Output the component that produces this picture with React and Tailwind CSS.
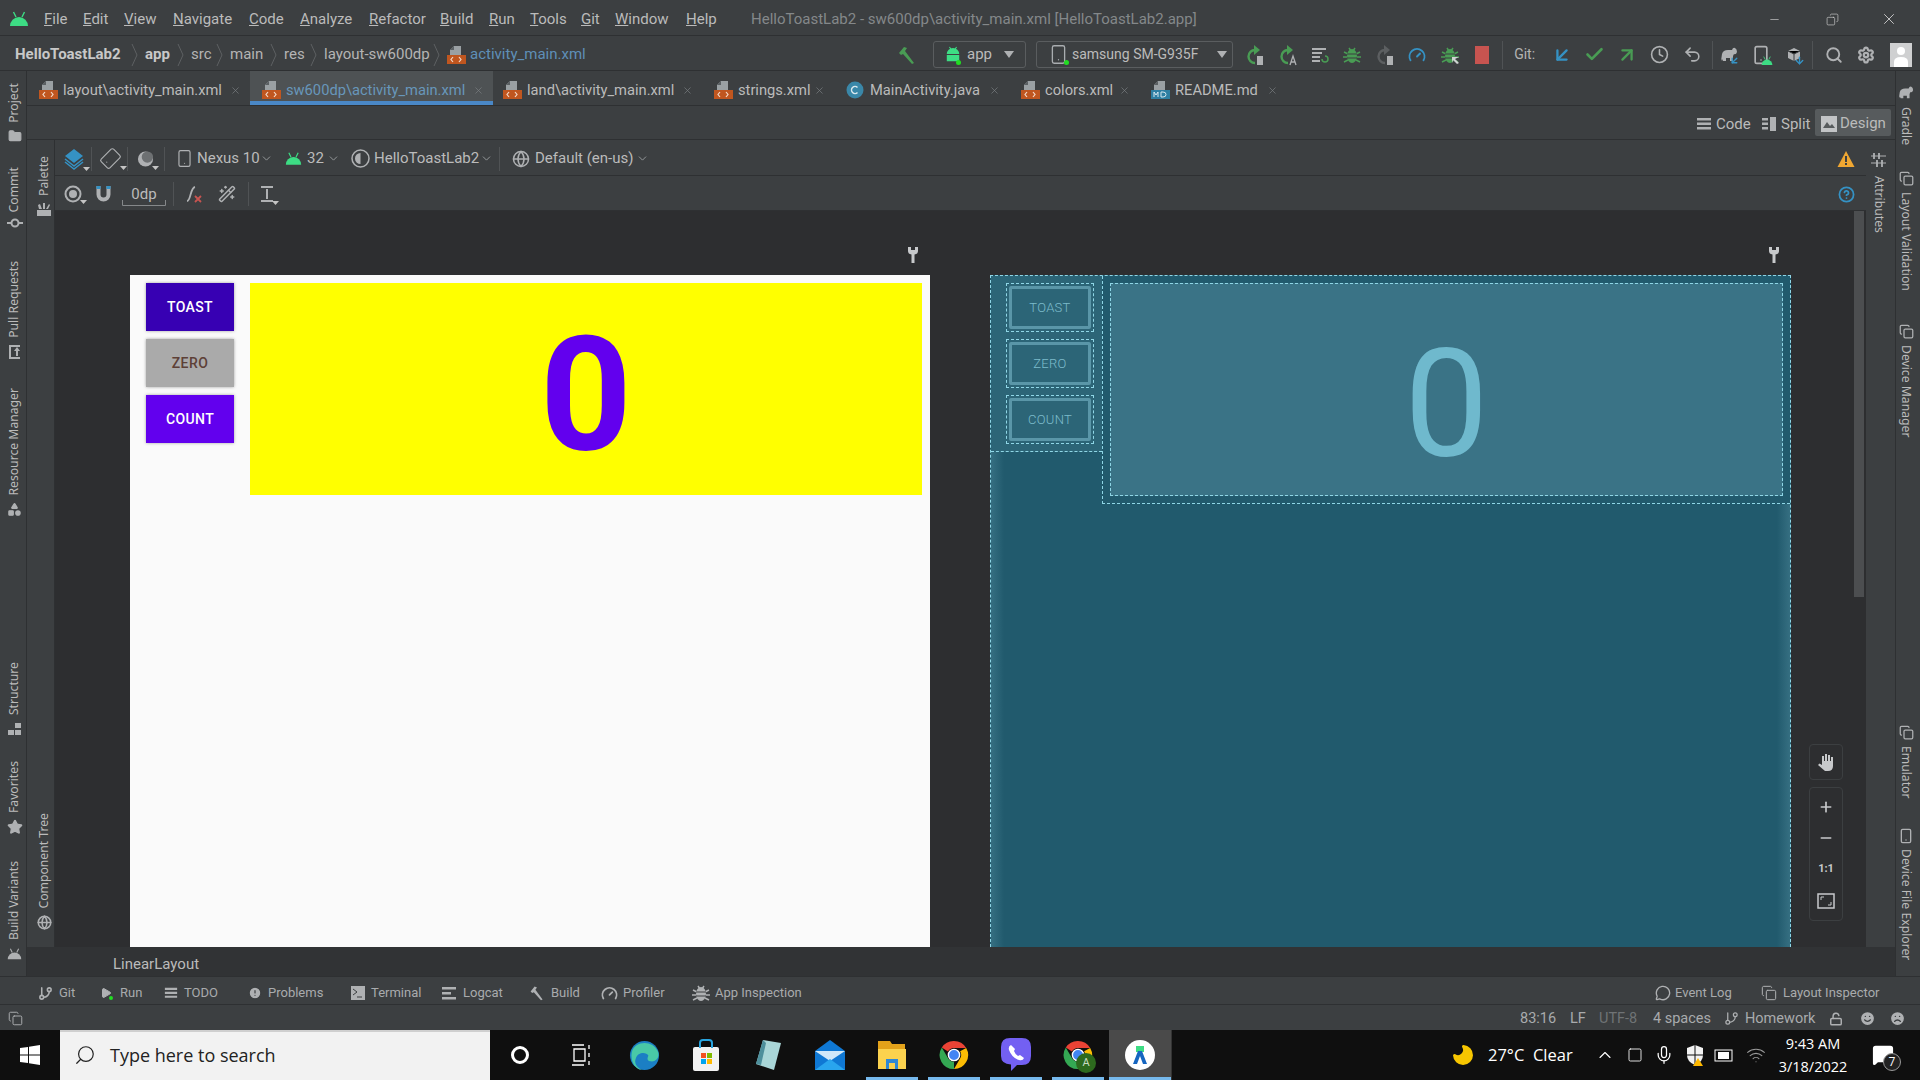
import React from 'react'
import {
  Search, Settings, Clock, Undo2, Check, ArrowUpRight, ArrowDownLeft, Wand2,
  Smartphone, Globe, ChevronDown, X, Minus, Plus, Star, Folder, Play, AlertCircle,
  ChevronUp, Smile, Frown, LockOpen, Mic, Wifi, Square, Shapes, Gauge, Copy, MessageSquare, MessageCircle, CircleHelp, Moon, GitBranch
} from 'lucide-react'

const XmlIcon = () => (
  <svg width="20" height="20" viewBox="0 0 20 20" className="shrink-0">
    <path d="M7 1h7v9H3V5z" fill="#9aa0a3" />
    <path d="M7 1v4H3z" fill="#5b6063" />
    <rect x="0" y="10" width="19" height="9" fill="#c0561f" />
    <path d="M6 12l-2 2.5L6 17M12 12l2 2.5L12 17" fill="none" stroke="#f3d9c9" strokeWidth="1.2" />
  </svg>
)

const MdIcon = () => (
  <svg width="20" height="20" viewBox="0 0 20 20" className="shrink-0">
    <path d="M7 1h7v9H3V5z" fill="#9aa0a3" />
    <path d="M7 1v4H3z" fill="#5b6063" />
    <rect x="0" y="10" width="19" height="9" fill="#2e7fa3" />
    <path d="M3 17v-5l2 3 2-3v5M10 12v5h2q3 0 3-2.500t-3-2.500z" fill="none" stroke="#d6e8f0" strokeWidth="1" />
  </svg>
)

const ClassIcon = () => (
  <svg width="18" height="18" viewBox="0 0 18 18" className="shrink-0">
    <circle cx="9" cy="9" r="8.500" fill="#3a87a8" />
    <path d="M11.500 6.500a3.500 3.500 0 1 0 0 5" fill="none" stroke="#d9e8ee" strokeWidth="1.500" />
  </svg>
)

const AndroidHead = ({ size = 20, color = '#3ddc84' }) => (
  <svg width={size} height={size * 0.8} viewBox="0 0 20 16" className="shrink-0">
    <path d="M1 15a9 9 0 0 1 18 0z" fill={color} />
    <path d="M4.500 1l2.500 5M15.500 1L13 6" stroke={color} strokeWidth="1.400" />
  </svg>
)

const Android = ({ dot }) => (
  <span className="relative flex">
    <svg width="16" height="20" viewBox="0 0 18 20">
      <path d="M2 9a7 7 0 0 1 14 0zM2 10h14v7H2z" fill="#3ddc84" />
      <path d="M5 1l2 3M13 1l-2 3" stroke="#3ddc84" strokeWidth="1.200" />
    </svg>
    {dot && <span className="absolute bottom-0 right-0 w-[5px] h-[5px] rounded-full bg-[#22dd22]" />}
  </span>
)

const HammerIcon = ({ size = 20, color = '#499c54' }) => (
  <svg width={size} height={size} viewBox="0 0 20 20" className="shrink-0">
    <path d="M2 8l5-6 3 1-2 3 9 12-2 1L6 9l-2 1z" fill={color} />
  </svg>
)

const BugSolid = ({ color = '#499c54', arrow }) => (
  <svg width="20" height="20" viewBox="0 0 20 20" className="shrink-0">
    <ellipse cx="10" cy="11" rx="5" ry="7" fill={color} />
    <path d="M7 3l2 3M13 3l-2 3M2 7l4 2M18 7l-4 2M1 12h4M19 12h-4M2 17l4-2M18 17l-4-2" stroke={color} strokeWidth="1.500" />
    <path d="M5 9h10M5 13h10" stroke="#3c3f41" />
    {arrow && <path d="M12 12h7l-4 2 4 4-2 1-4-4-1 3z" fill="#d0d2d3" />}
  </svg>
)

const RunIcon = ({ color = '#499c54', badge }) => (
  <svg width="20" height="22" viewBox="0 0 20 22" className="shrink-0">
    <path d="M10 6a6 6 0 1 0 0 13" fill="none" stroke={color} strokeWidth="2.400" />
    <path d="M9 1l6 5-6 5z" fill={color} />
    {badge === 'phone' && <rect x="12" y="12" width="6" height="9" fill="#afb1b3" />}
    {badge === 'a' && <path d="M12 21l3-9 3 9M13 18h4" fill="none" stroke="#afb1b3" strokeWidth="1.300" />}
  </svg>
)

const Elephant = ({ color = '#afb1b3', size = 18 }) => (
  <svg width={size} height={size} viewBox="0 0 18 18" className="shrink-0">
    <path d="M1 15l1-7q1-4 6-4h4q1-3 3-2 2 1 2 4-1 3-3 2l-1 2v5h-3v-3H6v3H3l-1-2-1 2z" fill={color} />
  </svg>
)

const Caret = () => (
  <svg width="7" height="4" viewBox="0 0 7 4" className="absolute -bottom-[1px] -right-[5px]">
    <path d="M0 0h7L3.500 4z" fill="#c4c4c4" />
  </svg>
)

const Crumb = ({ bold, w, children }) => (
  <div className="flex items-center">
    <span className={`${w} whitespace-nowrap ${bold ? 'font-bold text-[#c8c8c8]' : 'text-[#b4b4b4]'}`}>{children}</span>
    <svg width="8" height="24" viewBox="0 0 8 24" className="ml-[4px] mr-[6px]">
      <path d="M1 1l5 11-5 11" fill="none" stroke="#5d6062" />
    </svg>
  </div>
)

const menu = [
  ['F', 'ile', 'w-[39px]'], ['E', 'dit', 'w-[41px]'], ['V', 'iew', 'w-[49px]'], ['N', 'avigate', 'w-[76px]'],
  ['C', 'ode', 'w-[51px]'], ['A', 'nalyze', 'w-[69px]'], ['R', 'efactor', 'w-[71px]'], ['B', 'uild', 'w-[49px]'],
  ['R', 'un', 'w-[41px]'], ['T', 'ools', 'w-[51px]'], ['G', 'it', 'w-[34px]'], ['W', 'indow', 'w-[71px]'], ['H', 'elp', 'w-[65px]'],
]

const TitleBar = () => (
  <div className="h-[36px] flex items-center border-b border-[#2e3032] text-[15px] pt-[3px] shrink-0">
    <div className="w-[44px] pl-[9px]"><AndroidHead /></div>
    {menu.map(([u, rest, w], i) => (
      <span key={i} className={`${w} whitespace-nowrap text-[#bbbbbb]`}><span className="underline">{u}</span>{rest}</span>
    ))}
    <span className="text-[#84888a] whitespace-nowrap w-[1017px]">HelloToastLab2 - sw600dp\activity_main.xml [HelloToastLab2.app]</span>
    <Minus size={13} strokeWidth={1.200} className="text-[#d0d0d0]" />
    <Copy size={13} strokeWidth={1.200} className="ml-[45px] text-[#d0d0d0] -scale-x-100" />
    <X size={18} strokeWidth={1.200} className="ml-[41px] text-[#d0d0d0]" />
  </div>
)

const ToolIcon = ({ w = 'w-[32.4px]', children }) => <div className={`${w} flex justify-center items-center`}>{children}</div>

const NavBar = () => (
  <div className="h-[35px] flex items-center border-b border-[#2e3032] text-[15px] pt-[3px] shrink-0">
    <div className="w-[891px] flex items-center pl-[15px]">
      <Crumb bold w="w-[112px]">HelloToastLab2</Crumb>
      <Crumb bold w="w-[28px]">app</Crumb>
      <Crumb w="w-[21px]">src</Crumb>
      <Crumb w="w-[36px]">main</Crumb>
      <Crumb w="w-[22px]">res</Crumb>
      <Crumb w="w-[105px]">layout-sw600dp</Crumb>
      <XmlIcon />
      <span className="ml-[3px] text-[#5f8fb8] whitespace-nowrap">activity_main.xml</span>
    </div>
    <ToolIcon w="w-[32px]"><HammerIcon /></ToolIcon>
    <div className="ml-[10px] w-[93px] h-[27px] flex items-center border border-[#5a5d5f] rounded-[3px] pl-[11px]">
      <Android dot />
      <span className="ml-[6px] w-[37px]">app</span>
      <ChevronFill />
    </div>
    <div className="ml-[10px] w-[197px] h-[27px] flex items-center border border-[#5a5d5f] rounded-[3px] pl-[11px] text-[14px]">
      <span className="relative flex">
        <Smartphone size={21} strokeWidth={1.500} className="text-[#a9adb0]" />
        <span className="absolute bottom-0 right-0 w-[5px] h-[5px] rounded-full bg-[#22dd22]" />
      </span>
      <span className="ml-[3px] w-[145px] whitespace-nowrap">samsung SM-G935F</span>
      <ChevronFill />
    </div>
    <div className="ml-[6px] flex items-center">
      <ToolIcon><RunIcon badge="phone" /></ToolIcon>
      <ToolIcon><RunIcon badge="a" /></ToolIcon>
      <ToolIcon>
        <svg width="18" height="18" viewBox="0 0 18 18"><path d="M1 2h14v2H1zM1 6h10v2H1zM1 10h8v2H1zM1 14h8v2H1z" fill="#afb1b3" /><path d="M11 13a3 3 0 1 0 3-3" fill="none" stroke="#499c54" strokeWidth="1.500" /></svg>
      </ToolIcon>
      <ToolIcon><BugSolid /></ToolIcon>
      <ToolIcon><RunIcon color="#5c5f61" badge="phone" /></ToolIcon>
      <ToolIcon><Gauge size={18} strokeWidth={2.500} className="text-[#3592c4]" /></ToolIcon>
      <ToolIcon><BugSolid arrow /></ToolIcon>
      <ToolIcon><span className="block w-[14px] h-[18px] bg-[#c75450]" /></ToolIcon>
    </div>
    <div className="ml-[4px] w-px h-[28px] bg-[#505355]" />
    <span className="ml-[11px] w-[24px] text-[#b4b4b4] whitespace-nowrap text-[14px]">Git:</span>
    <div className="ml-[8px] flex items-center">
      <ToolIcon w="w-[32.500px]"><ArrowDownLeft size={22} strokeWidth={2.500} className="text-[#3592c4]" /></ToolIcon>
      <ToolIcon w="w-[32.500px]"><Check size={21} strokeWidth={3} className="text-[#499c54]" /></ToolIcon>
      <ToolIcon w="w-[32.500px]"><ArrowUpRight size={22} strokeWidth={2.500} className="text-[#499c54]" /></ToolIcon>
      <ToolIcon w="w-[32.500px]"><Clock size={19} strokeWidth={2} className="text-[#afb1b3]" /></ToolIcon>
      <ToolIcon w="w-[32.500px]"><Undo2 size={19} strokeWidth={2} className="text-[#afb1b3]" /></ToolIcon>
    </div>
    <div className="ml-[3px] w-px h-[28px] bg-[#505355]" />
    <ToolIcon>
      <span className="relative flex">
        <Elephant />
        <ArrowDownLeft size={11} strokeWidth={3} className="absolute -bottom-[2px] -right-[2px] text-[#3592c4]" />
      </span>
    </ToolIcon>
    <ToolIcon>
      <span className="relative flex">
        <Smartphone size={20} strokeWidth={2} className="text-[#afb1b3]" />
        <span className="absolute -bottom-[1px] -right-[2px] flex"><AndroidHead size={12} /></span>
      </span>
    </ToolIcon>
    <ToolIcon>
      <span className="relative flex">
        <svg width="16" height="16" viewBox="0 0 16 16"><path d="M8 1l6 3v7l-6 3-6-3V4z" fill="#afb1b3" /><path d="M2 4l6 3 6-3M8 7v7" stroke="#3c3f41" /></svg>
        <ArrowDownLeft size={11} strokeWidth={3} className="absolute -bottom-[3px] -right-[3px] -rotate-45 text-[#3592c4]" />
      </span>
    </ToolIcon>
    <div className="ml-[2px] w-px h-[28px] bg-[#505355]" />
    <div className="ml-[5px] flex items-center">
      <ToolIcon><Search size={18} strokeWidth={2.500} className="text-[#afb1b3]" /></ToolIcon>
      <ToolIcon><Settings size={18} strokeWidth={3} className="text-[#afb1b3]" /></ToolIcon>
    </div>
    <div className="ml-[7px] w-[22px] h-[24px] bg-[#cfd0d1] flex items-end justify-center overflow-hidden">
      <svg width="18" height="22" viewBox="0 0 18 22"><circle cx="9" cy="6" r="4" fill="#fff" /><path d="M2 22v-5q0-5 7-5t7 5v5z" fill="#fff" /></svg>
    </div>
  </div>
)

const ChevronFill = () => (
  <svg width="10" height="7" viewBox="0 0 10 7"><path d="M0 0h10L5 7z" fill="#afb1b3" /></svg>
)

const tabs = [
  { icon: <XmlIcon />, t: 'layout\\activity_main.xml', w: 'w-[159px]', pl: 'pl-[12px]' },
  { icon: <XmlIcon />, t: 'sw600dp\\activity_main.xml', w: 'w-[179px]', pl: 'pl-[12px]', active: true },
  { icon: <XmlIcon />, t: 'land\\activity_main.xml', w: 'w-[147px]', pl: 'pl-[10px]' },
  { icon: <XmlIcon />, t: 'strings.xml', w: 'w-[68px]', pl: 'pl-[12px]' },
  { icon: <ClassIcon />, t: 'MainActivity.java', w: 'w-[111px]', pl: 'pl-[12px]' },
  { icon: <XmlIcon />, t: 'colors.xml', w: 'w-[66px]', pl: 'pl-[12px]' },
  { icon: <MdIcon />, t: 'README.md', w: 'w-[84px]', pl: 'pl-[12px]' },
]

const Tabs = () => (
  <div className="h-[35px] flex border-b border-[#2e3032] text-[14.700px] shrink-0">
    {tabs.map((tab) => (
      <div key={tab.t} className={`relative flex items-center ${tab.pl} pr-[9px] pt-[4px] h-[34px] ${tab.active ? 'bg-[#4e5254]' : ''}`}>
        <span className="w-[24px] flex">{tab.icon}</span>
        <span className={`${tab.w} whitespace-nowrap ${tab.active ? 'text-[#6897bb]' : 'text-[#bbbbbb]'}`}>{tab.t}</span>
        <X size={11} strokeWidth={1.500} className="ml-[8px] text-[#7b7f81]" />
        {tab.active && <span className="absolute left-0 right-0 bottom-0 h-[4px] bg-[#4a88c7]" />}
      </div>
    ))}
  </div>
)

const Lines = ({ narrow, size = 16 }) => (
  <svg width={size} height={size} viewBox="0 0 16 16" className="shrink-0">
    {narrow
      ? <path d="M1 2h6v2.500H1zM1 6.500h6V9H1zM1 11h6v2.500H1zM9 1h6v14H9z" fill="#afb1b3" />
      : <path d="M1 2h14v2.500H1zM1 6.500h14V9H1zM1 11h14v2.500H1z" fill="#afb1b3" />}
  </svg>
)

const DesignRow = () => (
  <div className="h-[34px] flex items-center justify-end pr-[4px] pt-[3px] border-b border-[#2e3032] text-[15px] shrink-0">
    <Lines />
    <span className="ml-[4px] w-[45px]">Code</span>
    <Lines narrow />
    <span className="ml-[4px] w-[34px]">Split</span>
    <div className="w-[76px] h-[27px] -mt-[3px] rounded-[2px] bg-[#575b5d] flex items-center pl-[6px] pt-[2px]">
      <svg width="16" height="16" viewBox="0 0 16 16" className="shrink-0"><rect width="16" height="16" fill="#c2c4c6" /><path d="M2 12l4-6 3 4 2-2 3 4z" fill="#575b5d" /></svg>
      <span className="ml-[3px]">Design</span>
    </div>
  </div>
)

const Sep = ({ className = '' }) => <div className={`w-px h-[24px] bg-[#505355] ${className}`} />

const Chev = ({ className = '' }) => <ChevronDown size={13} strokeWidth={1.700} className={`text-[#9a9d9f] ${className}`} />

const ToolbarOne = () => (
  <div className="h-[36px] flex items-center border-b border-[#2e3032] text-[15px] shrink-0 pl-[8px] pt-[2px]">
    <span className="relative w-[22px] flex">
      <svg width="22" height="22" viewBox="0 0 22 22"><path d="M11 1l9 7-9 7-9-7z" fill="#3592c4" /><path d="M2 11l9 7 9-7M2 14l9 7 9-7" fill="none" stroke="#3592c4" strokeWidth="1.500" /></svg>
      <Caret />
    </span>
    <Sep className="ml-[6px]" />
    <span className="relative ml-[6px] w-[24px] flex justify-center">
      <Smartphone size={21} strokeWidth={1.300} className="text-[#afb1b3] rotate-45" />
      <Caret />
    </span>
    <Sep className="ml-[5px]" />
    <span className="relative ml-[9px] w-[17px] flex">
      <svg width="18" height="20" viewBox="0 0 18 20"><circle cx="9" cy="10" r="8" fill="#afb1b3" /><circle cx="11" cy="8" r="6" fill="#6d7072" /></svg>
      <Caret />
    </span>
    <Sep className="ml-[10px]" />
    <Smartphone size={19} strokeWidth={1.500} className="ml-[10px] text-[#afb1b3]" />
    <span className="ml-[3px] w-[60px] whitespace-nowrap">Nexus 10</span>
    <Chev className="ml-[3px]" />
    <span className="ml-[12px] flex"><AndroidHead size={17} /></span>
    <span className="ml-[5px] w-[16px]">32</span>
    <Chev className="ml-[4px]" />
    <svg width="19" height="19" viewBox="0 0 19 19" className="ml-[11px]"><circle cx="9.500" cy="9.500" r="8.500" fill="none" stroke="#afb1b3" strokeWidth="1.500" /><path d="M9.500 4a5.500 5.500 0 0 0 0 11z" fill="#afb1b3" /></svg>
    <span className="ml-[4px] w-[103px] whitespace-nowrap">HelloToastLab2</span>
    <Chev className="ml-[3px]" />
    <Sep className="ml-[6px]" />
    <Globe size={18} strokeWidth={2} className="ml-[12px] text-[#afb1b3]" />
    <span className="ml-[5px] w-[99px] whitespace-nowrap">Default (en-us)</span>
    <Chev className="ml-[2px]" />
    <svg width="18" height="18" viewBox="0 0 18 18" className="ml-auto mr-[11px]"><path d="M9 1l8.500 16H.500z" fill="#f0a732" /><path d="M8 6h2v6H8zM8 13h2v2H8z" fill="#3c3f41" /></svg>
  </div>
)

const ToolbarTwo = () => (
  <div className="h-[35px] flex items-center border-b border-[#2e3032] text-[15px] shrink-0 pl-[9px] pt-[2px]">
    <span className="relative flex">
      <svg width="18" height="18" viewBox="0 0 18 18"><circle cx="9" cy="9" r="7.500" fill="none" stroke="#afb1b3" strokeWidth="2" /><circle cx="9" cy="9" r="4" fill="#afb1b3" /></svg>
      <Caret />
    </span>
    <svg width="17" height="18" viewBox="0 0 17 18" className="ml-[13px]"><path d="M3.500 1v8.500a5 5 0 0 0 10 0V1" fill="none" stroke="#afb1b3" strokeWidth="4" /><path d="M1.500 1h4v3h-4zM11.500 1h4v3h-4z" fill="#3592c4" /></svg>
    <span className="relative ml-[10px] w-[44px] h-[24px] flex justify-center leading-[24px]">
      0dp
      <svg width="44" height="6" viewBox="0 0 44 6" className="absolute bottom-0 left-0"><path d="M.5 0v5.500h43V0" fill="none" stroke="#85888a" /></svg>
    </span>
    <Sep className="ml-[7px]" />
    <span className="relative ml-[11px] flex">
      <svg width="18" height="20" viewBox="0 0 18 20"><path d="M2 17c4 0 3-13 8-14" fill="none" stroke="#afb1b3" strokeWidth="1.800" /><path d="M10 12l6 6M16 12l-6 6" stroke="#c75450" strokeWidth="1.800" /></svg>
    </span>
    <Wand2 size={18} strokeWidth={2} className="ml-[15px] text-[#afb1b3]" />
    <Sep className="ml-[12px]" />
    <span className="relative ml-[11px] flex">
      <svg width="14" height="20" viewBox="0 0 14 20"><path d="M1 2h12v2H1zM1 16h12v2H1zM6 5h2v10H6z" fill="#afb1b3" /></svg>
      <Caret />
    </span>
    <CircleHelp size={17} strokeWidth={2.500} className="ml-auto mr-[11px] text-[#3592c4]" />
  </div>
)

const Wrench = () => (
  <svg width="12" height="18" viewBox="0 0 12 18"><path d="M1 1v4q0 3 3.500 3.500V17h3V8.500Q11 8 11 5V1L8 1v3H4V1z" fill="#c7c9cb" /></svg>
)

const PreviewButton = ({ color, text = 'text-white', children }) => (
  <div className={`w-[88px] h-[48px] flex items-center justify-center text-[14px] font-medium tracking-[0.4px] shadow-[0_0_3px_rgba(0,0,0,0.35)] ${color} ${text}`}>{children}</div>
)

const BlueButton = ({ children }) => (
  <div className="w-[88px] h-[49px] p-[2px] border border-dashed border-[#8fd6e6] flex">
    <div className="flex-1 flex items-center justify-center border-[3px] border-[#5a96a8] rounded-[2px] text-[13px] font-light text-[#7cbccc] tracking-[0.3px]">{children}</div>
  </div>
)

const Frame = ({ w, children }) => (
  <div className={`${w} shrink-0 flex flex-col h-full`}>
    <div className="h-[64px] shrink-0 flex items-end justify-end pb-[11px] pr-[11px]"><Wrench /></div>
    {children}
  </div>
)

const Canvas = () => (
  <div className="relative flex-1 min-h-0 bg-[#2d2e30] flex pl-[75px] gap-[60px] overflow-hidden font-[Roboto,sans-serif]">
    <Frame w="w-[800px]">
      <div className="flex-1 bg-[#fafafa] flex items-start pt-[8px] pl-[16px] pr-[8px]">
        <div className="flex flex-col gap-[8px]">
          <PreviewButton color="bg-[#3700b3]">TOAST</PreviewButton>
          <PreviewButton color="bg-[#aaaaaa]" text="text-[#5d4037]">ZERO</PreviewButton>
          <PreviewButton color="bg-[#6200ee]">COUNT</PreviewButton>
        </div>
        <div className="ml-[16px] flex-1 h-[212px] pt-[12px] bg-[#ffff00] flex items-center justify-center text-[160px] font-bold leading-none text-[#6200ee]">0</div>
      </div>
    </Frame>
    <Frame w="w-[801px]">
      <div className="relative flex-1 bg-[#215a6d] border-x border-t border-dashed border-[#8fd6e6] flex items-start">
        <div className="w-[111px] h-[176px] bg-[#2c6577] border-b border-dashed border-[#8fd6e6] pl-[15px] pt-[7px] flex flex-col gap-[7px]">
          <BlueButton>TOAST</BlueButton>
          <BlueButton>ZERO</BlueButton>
          <BlueButton>COUNT</BlueButton>
        </div>
        <div className="flex-1 h-[228px] border-l border-b border-dashed border-[#8fd6e6] p-[7px]">
          <div className="h-full bg-[#3a7386] border border-dashed border-[#8fd6e6] flex items-center justify-center text-[150px] leading-none text-[#6fb9cd] pt-[30px]">0</div>
        </div>
        <div className="absolute left-0 bottom-0 top-[176px] w-[13px] bg-linear-to-r from-[#4a8496]/50 to-transparent" />
        <div className="absolute right-0 bottom-0 top-[228px] w-[13px] bg-linear-to-l from-[#4a8496]/50 to-transparent" />
      </div>
    </Frame>
    <div className="absolute right-[2px] top-0 w-[10px] h-[386px] bg-[#4c4e50]" />
    <div className="absolute right-[23px] top-[533px] w-[34px] flex flex-col gap-[7px] text-[#c7c9cb]">
      <div className="h-[36px] rounded-[4px] border border-[#3c3f41] flex items-center justify-center">
        <svg width="18" height="19" viewBox="0 0 18 19"><path d="M5 9V3h2v5h1V1h2v7h1V2h2v6h1V4h2v9q0 5-5 5H8l-7-6 1.500-1.500L5 12z" fill="currentColor" /></svg>
      </div>
      <div className="h-[134px] rounded-[4px] border border-[#3c3f41] flex flex-col items-center justify-around py-[3px]">
        <Plus size={16} strokeWidth={2.500} />
        <Minus size={16} strokeWidth={2.500} />
        <span className="text-[11px] font-bold">1:1</span>
        <svg width="18" height="16" viewBox="0 0 18 16"><rect x="1" y="1" width="16" height="14" fill="none" stroke="currentColor" strokeWidth="1.500" /><path d="M4 7V4h3M14 9v3h-3" fill="none" stroke="currentColor" /></svg>
      </div>
    </div>
  </div>
)

const Vert = ({ className = '', children }) => (
  <span className={`[writing-mode:vertical-rl] rotate-180 whitespace-nowrap text-[12.200px] font-['Noto_Sans',sans-serif] text-[#bbbbbb] ${className}`}>{children}</span>
)
const VertDown = ({ className = '', children }) => (
  <span className={`[writing-mode:vertical-rl] whitespace-nowrap text-[12.200px] font-['Noto_Sans',sans-serif] text-[#bbbbbb] ${className}`}>{children}</span>
)

const LeftStripe = () => (
  <div className="w-[27px] shrink-0 border-r border-[#2e3032] flex flex-col items-center text-[#afb1b3] pl-[3px] pt-[12px] pb-[16px]">
    <Vert>Project</Vert>
    <Folder size={14} fill="currentColor" className="mt-[6px]" />
    <Vert className="mt-[24px]">Commit</Vert>
    <svg width="16" height="10" viewBox="0 0 16 10" className="mt-[6px]"><circle cx="8" cy="5" r="3.500" fill="none" stroke="currentColor" strokeWidth="2" /><path d="M0 5h4M12 5h4" stroke="currentColor" strokeWidth="2" /></svg>
    <Vert className="mt-[33px]">Pull Requests</Vert>
    <svg width="13" height="14" viewBox="0 0 13 14" className="mt-[7px]"><path d="M1 0h11v2H3v10h9v2H1zM6 6l3-4 3 4h-2v5H8V6z" fill="currentColor" /></svg>
    <Vert className="mt-[29px]">Resource Manager</Vert>
    <Shapes size={15} fill="currentColor" className="mt-[6px]" />
    <div className="flex-1" />
    <Vert>Structure</Vert>
    <svg width="13" height="12" viewBox="0 0 13 12" className="mt-[8px]"><path d="M7 0h6v5H7zM0 7h6v5H0zM7 7h6v5H7z" fill="currentColor" /></svg>
    <Vert className="mt-[26px]">Favorites</Vert>
    <Star size={16} fill="currentColor" className="mt-[6px]" />
    <Vert className="mt-[26px]">Build Variants</Vert>
    <span className="mt-[8px] flex"><AndroidHead size={15} color="#afb1b3" /></span>
  </div>
)

const PaletteStripe = () => (
  <div className="w-[28px] shrink-0 border-r border-[#2e3032] flex flex-col items-center text-[#afb1b3] pl-[7px] pt-[16px] pb-[17px]">
    <Vert>Palette</Vert>
    <svg width="14" height="14" viewBox="0 0 14 14" className="mt-[6px]"><path d="M0 8h14v6H0zM2 7L1 3l2-1 2 5zM6 7V1h2v6zM9 7l3-5 1 1-2 4z" fill="currentColor" /></svg>
    <div className="flex-1" />
    <Vert>Component Tree</Vert>
    <Globe size={15} strokeWidth={2.500} className="mt-[6px]" />
  </div>
)

const AttributesStripe = () => (
  <div className="w-[29px] shrink-0 flex flex-col items-center text-[#afb1b3] pr-[4px] pt-[13px]">
    <svg width="15" height="14" viewBox="0 0 15 14"><path d="M0 3h15M0 10h15" stroke="currentColor" strokeWidth="1.200" /><path d="M3 0v6M8 0v6M6 7v7M11 7v7" stroke="currentColor" strokeWidth="1.800" /></svg>
    <VertDown className="mt-[9px] text-[#a9bccb]">Attributes</VertDown>
  </div>
)

const RightStripe = () => (
  <div className="w-[25px] shrink-0 border-l border-[#2e3032] flex flex-col items-center text-[#afb1b3] pr-[4px] pt-[14px] pb-[16px]">
    <Elephant size={16} />
    <VertDown className="mt-[6px]">Gradle</VertDown>
    <Copy size={15} strokeWidth={2} className="mt-[26px]" />
    <VertDown className="mt-[6px]">Layout Validation</VertDown>
    <Copy size={15} strokeWidth={2} className="mt-[33px]" />
    <VertDown className="mt-[6px]">Device Manager</VertDown>
    <div className="flex-1" />
    <Copy size={15} strokeWidth={2} />
    <VertDown className="mt-[6px]">Emulator</VertDown>
    <Smartphone size={16} strokeWidth={2} className="mt-[29px]" />
    <VertDown className="mt-[5px]">Device File Explorer</VertDown>
  </div>
)

const Tool = ({ icon, className = '', children }) => (
  <div className={`flex items-center shrink-0 ${className}`}>
    {icon}
    <span className="whitespace-nowrap">{children}</span>
  </div>
)

const ToolBar = () => (
  <div className="h-[29px] shrink-0 flex items-center border-y border-[#2e3032] text-[13px] text-[#a9abad] pt-[5px]">
    <Tool className="w-[100px] pl-[38px] gap-[6px]" icon={<GitBranch size={15} strokeWidth={2.500} className="text-[#afb1b3]" />}>Git</Tool>
    <Tool className="w-[64px] gap-[8px]" icon={<span className="relative flex"><Play size={12} fill="#afb1b3" className="text-[#afb1b3]" /><span className="absolute -bottom-[1px] -right-[1px] w-[4px] h-[4px] rounded-full bg-[#22dd22]" /></span>}>Run</Tool>
    <Tool className="w-[84px] gap-[6px]" icon={<Lines size={14} />}>TODO</Tool>
    <Tool className="w-[103px] gap-[6px]" icon={<AlertCircle size={14} fill="#afb1b3" className="text-[#3c3f41]" />}>Problems</Tool>
    <Tool className="w-[91px] gap-[6px]" icon={<svg width="14" height="14" viewBox="0 0 14 14"><rect width="14" height="14" fill="#afb1b3" /><path d="M2 3l4 3-4 3M6 11h5" fill="none" stroke="#3c3f41" /></svg>}>Terminal</Tool>
    <Tool className="w-[87px] gap-[7px]" icon={<svg width="14" height="14" viewBox="0 0 14 14"><path d="M0 1h14v2.500H0zM0 6h9v2.500H0zM0 11h14v2.500H0z" fill="#afb1b3" /></svg>}>Logcat</Tool>
    <Tool className="w-[72px] gap-[6px]" icon={<HammerIcon size={16} color="#afb1b3" />}>Build</Tool>
    <Tool className="w-[90px] gap-[5px]" icon={<Gauge size={17} strokeWidth={2.500} className="text-[#afb1b3]" />}>Profiler</Tool>
    <Tool className="gap-[4px]" icon={<BugSolid color="#afb1b3" />}>App Inspection</Tool>
    <Tool className="ml-auto w-[106px] gap-[4px]" icon={<MessageCircle size={16} strokeWidth={2} className="text-[#afb1b3]" />}>Event Log</Tool>
    <Tool className="w-[159px] gap-[6px]" icon={<Copy size={16} strokeWidth={1.500} className="text-[#afb1b3]" />}>Layout Inspector</Tool>
  </div>
)

const StatusBar = () => (
  <div className="h-[25px] shrink-0 flex items-center text-[14.500px] text-[#a9abad] pt-[2px]">
    <Copy size={15} strokeWidth={1.500} className="ml-[8px] text-[#afb1b3]" />
    <span className="ml-[1497px] w-[50px]">83:16</span>
    <span className="w-[29px]">LF</span>
    <span className="w-[54px] text-[#6f7375]">UTF-8</span>
    <span className="w-[71px] whitespace-nowrap">4 spaces</span>
    <GitBranch size={15} strokeWidth={2} className="text-[#afb1b3]" />
    <span className="ml-[6px] w-[84px]">Homework</span>
    <LockOpen size={14} strokeWidth={2.500} className="text-[#afb1b3]" />
    <Smile size={17} fill="#afb1b3" className="ml-[16px] text-[#3c3f41]" />
    <Frown size={17} fill="#afb1b3" className="ml-[13px] text-[#3c3f41]" />
  </div>
)

const ChromeIcon = ({ badge }) => (
  <span className="relative flex">
    <svg width="30" height="30" viewBox="0 0 32 32">
      <path d="M16 1a15 15 0 0 1 13 7.500H16a7.500 7.500 0 0 0-6.500 3.800L3 8A15 15 0 0 1 16 1z" fill="#ea4335" />
      <path d="M29 8.500A15 15 0 0 1 16 31l6.500-11.200A7.500 7.500 0 0 0 22.500 12z" fill="#fbbc04" />
      <path d="M16 31A15 15 0 0 1 3 8l6.500 11.300a7.500 7.500 0 0 0 6.500 4z" fill="#34a853" />
      <circle cx="16" cy="16" r="6" fill="#4285f4" stroke="#fff" strokeWidth="1.500" />
    </svg>
    {badge && <span className="absolute -bottom-[3px] -right-[3px] w-[20px] h-[20px] rounded-full bg-[#2d6a1e] text-[#c9dcc2] text-[11px] flex items-center justify-center">A</span>}
  </span>
)

const apps = [
  { icon: <svg width="31" height="31" viewBox="0 0 32 32"><circle cx="16" cy="16" r="15" fill="#1b7fc4" /><path d="M3 12C6 1 24-1 30 12c2 7-3 11-8 10-5-1-2-5-2-6-2-4-11-4-13 3-2 5 1 9 6 12C6 30 1 22 3 12z" fill="#49c9a7" /></svg> },
  { icon: <svg width="28" height="32" viewBox="0 0 28 32"><rect x="1" y="8" width="26" height="24" rx="2" fill="#f2f2f2" /><path d="M8 9V4q0-3 3-3h6q3 0 3 3v5" fill="none" stroke="#29a5e0" strokeWidth="2" /><path d="M9 14h5v5H9z" fill="#f25022" /><path d="M15 14h5v5h-5z" fill="#7fba00" /><path d="M9 20h5v5H9z" fill="#00a4ef" /><path d="M15 20h5v5h-5z" fill="#ffb900" /></svg> },
  { icon: <svg width="28" height="32" viewBox="0 0 28 32"><path d="M9 1l18 3-7 27L2 25z" fill="#a9d6d8" /><path d="M9 1l3 3L7 26l-5-1z" fill="#4d8f9c" /></svg> },
  { icon: <svg width="30" height="30" viewBox="0 0 30 30"><path d="M15 0l15 11v19H0V11z" fill="#0f78d4" /><path d="M0 11h30L15 21z" fill="#cfe8fa" /><path d="M0 30l15-11 15 11z" fill="#29a5ee" /></svg> },
  { icon: <svg width="30" height="30" viewBox="0 0 30 30"><path d="M1 1h12l2 3h13v7H1z" fill="#e3a21a" /><path d="M1 9h28v20H1z" fill="#fbd24e" /><path d="M9 19h12v10h-3v-6h-6v6H9z" fill="#2f88d4" /></svg> },
  { icon: <ChromeIcon /> },
  { icon: <svg width="30" height="34" viewBox="0 0 30 34"><path d="M9 0h12q9 0 9 9v9q0 9-9 9h-5l-6 6v-6.500Q0 26 0 18V9q0-9 9-9z" fill="#7360f2" /><path d="M10 7q-3 1-2 5 3 8 10 10 4 1 5-2l-4-3-2 1q-3-2-4-5l1-2z" fill="#fff" /></svg> },
  { icon: <ChromeIcon badge /> },
  { active: true, icon: <span className="w-[30px] h-[30px] rounded-full bg-white flex items-center justify-center"><svg width="18" height="20" viewBox="0 0 18 20"><path d="M5 1h8v6H5z" fill="#3ddc84" /><path d="M7 6h4l5 13h-4l-3-8-3 8H2z" fill="#1565c0" /></svg></span> },
]

const TaskBar = () => (
  <div className="h-[50px] shrink-0 bg-[#0f0f0f] flex items-stretch text-white">
    <div className="w-[60px] flex items-center justify-center">
      <svg width="20" height="20" viewBox="0 0 20 20"><path d="M0 3l8-1v7.500H0zM9 1.800L20 0v9.500H9zM0 10.500h8V18l-8-1zM9 10.500h11V20L9 18.200z" fill="#fff" /></svg>
    </div>
    <div className="w-[430px] bg-[#f2f2f2] border-t-2 border-[#cfcfcf] flex items-center pl-[14px] pb-[2px] text-[#222222] text-[18px] font-['Open_Sans',sans-serif]">
      <Search size={22} strokeWidth={1.300} className="-scale-x-100 text-[#222222]" />
      <span className="ml-[14px]">Type here to search</span>
    </div>
    <div className="w-[60px] flex items-center justify-center">
      <span className="w-[18px] h-[18px] rounded-full border-[3px] border-white" />
    </div>
    <div className="w-[61px] flex items-center justify-center">
      <svg width="20" height="22" viewBox="0 0 20 22"><path d="M1 1h12M1 21h12M3 5h11v12H3zM18 1v4M18 9v4M18 17v4" fill="none" stroke="#fff" strokeWidth="1.300" /></svg>
    </div>
    <div className="flex pl-[2px]">
      {apps.map((app, i) => (
        <div key={i} className={`relative w-[62px] flex items-center justify-center ${app.active ? 'bg-[#4a4a4a]' : ''}`}>
          {app.icon}
          {i >= 4 && <span className={`absolute bottom-0 h-[3px] bg-[#76b9ed] ${app.active ? 'left-0 right-0' : 'left-[5px] right-[5px]'}`} />}
        </div>
      ))}
    </div>
    <div className="w-px bg-[#333333]" />
    <div className="flex-1 flex items-center pl-[279px] font-['Open_Sans',sans-serif]">
      <Moon size={24} fill="#f7c600" className="text-[#f7c600] -scale-x-100" />
      <span className="ml-[13px] w-[107px] text-[16.500px] whitespace-nowrap">27°C &nbsp;Clear</span>
      <ChevronUp size={20} strokeWidth={1.300} />
      <Square size={16} strokeWidth={1.300} className="ml-[12px]" />
      <Mic size={20} strokeWidth={1.500} className="ml-[11px]" />
      <svg width="20" height="22" viewBox="0 0 20 22" className="ml-[11px]"><path d="M10 1l8 3v7q0 7-8 10-8-3-8-10V4z" fill="#f2f2f2" /><path d="M10 1v20M2 11h16" stroke="#0f0f0f" /><path d="M13 14l5 8H8z" fill="#ffb900" /></svg>
      <svg width="20" height="14" viewBox="0 0 20 14" className="ml-[9px]"><rect x="1" y="2" width="17" height="11" fill="none" stroke="#fff" /><rect x="4" y="4" width="11" height="7" fill="#fff" /></svg>
      <Wifi size={20} strokeWidth={1.300} className="ml-[12px] text-[#999999]" />
      <div className="ml-[3px] w-[88px] flex flex-col items-center text-[14.500px] leading-[23px] whitespace-nowrap">
        <span>9:43 AM</span>
        <span>3/18/2022</span>
      </div>
      <div className="relative ml-[15px] w-[24px]">
        <MessageSquare size={22} fill="#fff" className="text-white" />
        <span className="absolute -bottom-[5px] -right-[5px] w-[18px] h-[18px] rounded-full bg-[#222222] border border-[#999999] text-[12px] leading-none flex items-center justify-center">7</span>
      </div>
    </div>
  </div>
)

export default function App() {
  return (
    <div className="w-[1920px] h-[1080px] overflow-hidden flex flex-col bg-[#3c3f41] text-[#bbbbbb] font-[Roboto,sans-serif]">
      <TitleBar />
      <NavBar />
      <div className="flex-1 min-h-0 flex">
        <LeftStripe />
        <div className="flex-1 min-w-0 flex flex-col">
          <Tabs />
          <DesignRow />
          <div className="flex-1 min-h-0 flex">
            <PaletteStripe />
            <div className="flex-1 min-w-0 flex flex-col">
              <ToolbarOne />
              <ToolbarTwo />
              <Canvas />
            </div>
            <AttributesStripe />
          </div>
          <div className="h-[29px] shrink-0 bg-[#313335] flex items-center pl-[86px] pt-[5px] text-[15px]">LinearLayout</div>
        </div>
        <RightStripe />
      </div>
      <ToolBar />
      <StatusBar />
      <TaskBar />
    </div>
  )
}
